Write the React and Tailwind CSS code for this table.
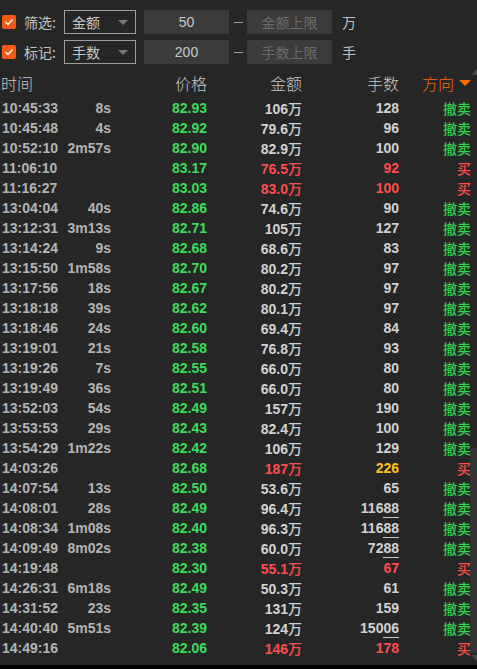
import React from 'react';

const rows = [
  ['10:45:33', '8s', '82.93', '106万', '128', 's'],
  ['10:45:48', '4s', '82.92', '79.6万', '96', 's'],
  ['10:52:10', '2m57s', '82.90', '82.9万', '100', 's'],
  ['11:06:10', '', '83.17', '76.5万', '92', 'b'],
  ['11:16:27', '', '83.03', '83.0万', '100', 'b'],
  ['13:04:04', '40s', '82.86', '74.6万', '90', 's'],
  ['13:12:31', '3m13s', '82.71', '105万', '127', 's'],
  ['13:14:24', '9s', '82.68', '68.6万', '83', 's'],
  ['13:15:50', '1m58s', '82.70', '80.2万', '97', 's'],
  ['13:17:56', '18s', '82.67', '80.2万', '97', 's'],
  ['13:18:18', '39s', '82.62', '80.1万', '97', 's'],
  ['13:18:46', '24s', '82.60', '69.4万', '84', 's'],
  ['13:19:01', '21s', '82.58', '76.8万', '93', 's'],
  ['13:19:26', '7s', '82.55', '66.0万', '80', 's'],
  ['13:19:49', '36s', '82.51', '66.0万', '80', 's'],
  ['13:52:03', '54s', '82.49', '157万', '190', 's'],
  ['13:53:53', '29s', '82.43', '82.4万', '100', 's'],
  ['13:54:29', '1m22s', '82.42', '106万', '129', 's'],
  ['14:03:26', '', '82.68', '187万', '226', 'b', true],
  ['14:07:54', '13s', '82.50', '53.6万', '65', 's'],
  ['14:08:01', '28s', '82.49', '96.4万', '11688', 's'],
  ['14:08:34', '1m08s', '82.40', '96.3万', '11688', 's'],
  ['14:09:49', '8m02s', '82.38', '60.0万', '7288', 's'],
  ['14:19:48', '', '82.30', '55.1万', '67', 'b'],
  ['14:26:31', '6m18s', '82.49', '50.3万', '61', 's'],
  ['14:31:52', '23s', '82.35', '131万', '159', 's'],
  ['14:40:40', '5m51s', '82.39', '124万', '15006', 's'],
  ['14:49:16', '', '82.06', '146万', '178', 'b'],
];

const num = { fontFamily: '"Liberation Sans", "Noto Sans CJK SC", sans-serif' };
const cjk = { fontFamily: '"Noto Sans CJK SC", "Liberation Sans", sans-serif' };

const Caret = ({ className }) => (
  <svg width="10" height="5" viewBox="0 0 10 5" className={className}>
    <path d="M0 0h10L5 5z" fill="currentColor" />
  </svg>
);

const Check = () => (
  <div className="w-[14px] h-[14px] rounded-[2px] bg-[#f05a14] flex items-center justify-center">
    <svg width="10" height="8" viewBox="0 0 10 8">
      <path d="M1.5 4l2.5 2.5L8.5 1.5" fill="none" stroke="#fff" strokeWidth="1.4" />
    </svg>
  </div>
);

function ControlRow({ label, sel, value, placeholder, unit }) {
  return (
    <div className="flex items-center h-[24px] text-[14px]" style={cjk}>
      <div className="w-[24px] pl-[2px]"><Check /></div>
      <div className="w-[40px] text-[#c4c4c4]">{label}</div>
      <div className="w-[72px] h-[24px] border border-[#9c9c9c] flex items-center justify-between pl-[7px] pr-[7px] text-[#c8c8c8]">
        <span>{sel}</span>
        <Caret className="text-[#777777]" />
      </div>
      <div className="ml-[8px] w-[85px] h-[24px] bg-[#3b3b3b] flex items-center justify-center text-[#c8c8c8]" style={num}>{value}</div>
      <div className="w-[18px] flex justify-center"><div className="w-[9px] h-px bg-[#a0a0a0]" /></div>
      <div className="w-[85px] h-[24px] bg-[#3b3b3b] flex items-center justify-center text-[#6c6c6c]">{placeholder}</div>
      <div className="ml-[10px] text-[#c0c0c0]">{unit}</div>
    </div>
  );
}

function Volume({ v }) {
  if (v.length >= 4) {
    return (
      <span>
        {v.slice(0, -2)}
        <span className="border-b border-[#c8c8c8] pb-[1px]">{v.slice(-2)}</span>
      </span>
    );
  }
  return v;
}

export default function App() {
  return (
    <div className="w-[477px] h-[669px] bg-[#262626] relative overflow-hidden flex flex-col">
      <div className="pt-[10px] flex flex-col gap-[6px]">
        <ControlRow label="筛选:" sel="金额" value="50" placeholder="金额上限" unit="万" />
        <ControlRow label="标记:" sel="手数" value="200" placeholder="手数上限" unit="手" />
      </div>

      <div className="mt-[4px] h-[30px] flex items-center text-[16px] font-light text-[#c8c8c8]" style={cjk}>
        <div className="w-[111px] pl-[1px]">时间</div>
        <div className="w-[96px] text-right">价格</div>
        <div className="w-[95px] text-right">金额</div>
        <div className="w-[97px] text-right">手数</div>
        <div className="w-[72px] flex items-center justify-end gap-[5px] text-[#ff6a00]">
          <span>方向</span>
          <svg width="12" height="6" viewBox="0 0 12 6"><path d="M0 0h12L6 6z" fill="#ff6a00" /></svg>
        </div>
      </div>

      <div className="flex flex-col text-[14px] font-bold" style={num}>
        {rows.map(([t, d, p, amt, vol, dir, hi], i) => {
          const buy = dir === 'b';
          return (
            <div key={i} className="h-[20px] flex items-center leading-none">
              <div className="w-[62px] pl-[2px] text-[#b4b4b4]">{t}</div>
              <div className="w-[49px] text-right text-[#b4b4b4]">{d}</div>
              <div className="w-[96px] text-right text-[#3ddc5c]">{p}</div>
              <div className={`w-[95px] text-right ${buy ? 'text-[#ff4d4d]' : 'text-[#d2d2d2]'}`}>
                {amt.slice(0, -1)}<span className="font-medium text-[14px]" style={cjk}>万</span>
              </div>
              <div className={`w-[97px] text-right ${hi ? 'text-[#ffc125]' : buy ? 'text-[#ff4d4d]' : 'text-[#d2d2d2]'}`}>
                <Volume v={vol} />
              </div>
              <div className={`w-[72px] text-right font-medium text-[14px] ${buy ? 'text-[#ff4d4d]' : 'text-[#2ed44e]'}`} style={cjk}>
                {buy ? '买' : '撤卖'}
              </div>
            </div>
          );
        })}
      </div>

      {/* scrollbar sliver on the right edge */}
      <div className="absolute right-0 top-[448px] w-[7px] h-[205px] bg-[#343434]" />
      <svg className="absolute right-0 top-[69px]" width="6" height="6" viewBox="0 0 6 6"><path d="M6 0v6H0z" fill="#4a4a4a" /></svg>
      <svg className="absolute right-0 top-[655px]" width="6" height="6" viewBox="0 0 6 6"><path d="M0 0h6v6z" fill="#4a4a4a" /></svg>

      <div className="absolute left-0 right-0 bottom-0 h-[4px] bg-black" />
    </div>
  );
}
